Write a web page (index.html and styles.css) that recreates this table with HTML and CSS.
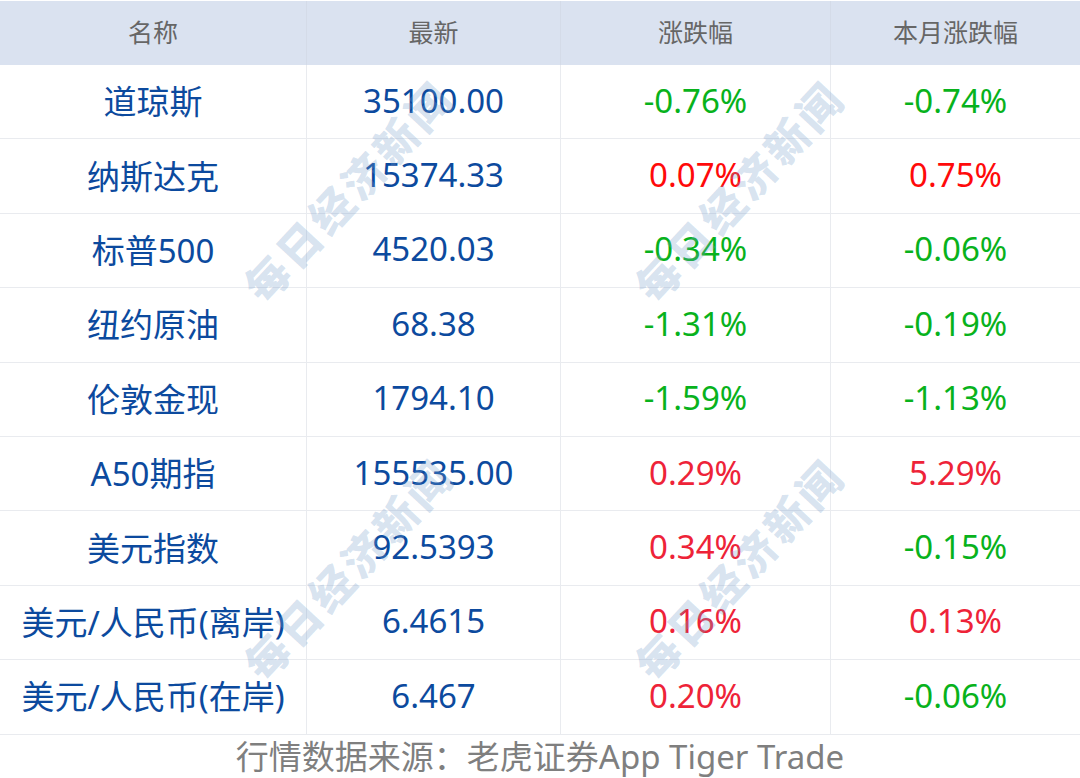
FILE: index.html
```html
<!doctype html>
<html lang="zh-CN">
<head>
    <meta charset="utf-8">
    <meta name="viewport" content="width=device-width, initial-scale=1">
    <title>行情数据</title>
    <link rel="stylesheet" href="styles.css">
</head>

<body>
    <div class="board">
        <div class="quotes">
            <div class="cell head">名称</div>
            <div class="cell head">最新</div>
            <div class="cell head">涨跌幅</div>
            <div class="cell head">本月涨跌幅</div>

            <div class="cell name">道琼斯</div>
            <div class="cell num">35100.00</div>
            <div class="cell down">-0.76%</div>
            <div class="cell down">-0.74%</div>

            <div class="cell name">纳斯达克</div>
            <div class="cell num">15374.33</div>
            <div class="cell up bright">0.07%</div>
            <div class="cell up bright">0.75%</div>

            <div class="cell name">标普500</div>
            <div class="cell num">4520.03</div>
            <div class="cell down">-0.34%</div>
            <div class="cell down">-0.06%</div>

            <div class="cell name">纽约原油</div>
            <div class="cell num">68.38</div>
            <div class="cell down">-1.31%</div>
            <div class="cell down">-0.19%</div>

            <div class="cell name">伦敦金现</div>
            <div class="cell num">1794.10</div>
            <div class="cell down">-1.59%</div>
            <div class="cell down">-1.13%</div>

            <div class="cell name">A50期指</div>
            <div class="cell num">155535.00</div>
            <div class="cell up">0.29%</div>
            <div class="cell up">5.29%</div>

            <div class="cell name">美元指数</div>
            <div class="cell num">92.5393</div>
            <div class="cell up">0.34%</div>
            <div class="cell down">-0.15%</div>

            <div class="cell name">美元/人民币(离岸)</div>
            <div class="cell num">6.4615</div>
            <div class="cell up">0.16%</div>
            <div class="cell up">0.13%</div>

            <div class="cell name">美元/人民币(在岸)</div>
            <div class="cell num">6.467</div>
            <div class="cell up">0.20%</div>
            <div class="cell down">-0.06%</div>
        </div>

        <div class="mark mark-a">每日经济新闻</div>
        <div class="mark mark-b">每日经济新闻</div>
        <div class="mark mark-c">每日经济新闻</div>
        <div class="mark mark-d">每日经济新闻</div>
    </div>

    <div class="source">行情数据来源：老虎证券App Tiger Trade</div>
</body>
</html>
```

FILE: styles.css
```css
* {
  box-sizing: border-box;
}

body {
  margin: 0;
  width: 1080px;
  height: 778px;
  overflow: hidden;
  background: #fff;
  font-family: 'Noto Sans', 'Noto Sans CJK SC', sans-serif;
}

.board {
  position: relative;
  overflow: hidden;
}

.quotes {
  display: grid;
  grid-template-columns: 307px 254px 270px 249px;
  grid-template-rows: 64px repeat(9, 74.4px);
  border-top: 1px solid #fff;
}

.cell {
  display: flex;
  align-items: center;
  justify-content: center;
  border-right: 1px solid #e9ebef;
  border-bottom: 1px solid #e9ebef;
  font-size: 33px;
  white-space: nowrap;
  padding-bottom: 3px;
}

.cell:nth-child(4n) {
  border-right: none;
}

.head {
  background: #dae2f0;
  color: #666;
  font-size: 25px;
  border-bottom: none;
  border-right-color: #d4dbe8;
  padding-bottom: 4px;
}

.name,
.num {
  color: #0c4a9e;
}

.down {
  color: #08b21c;
}

.up {
  color: #ee2338;
}

.up.bright {
  color: #ff0a0a;
}

.mark {
  position: absolute;
  width: 360px;
  margin-left: -180px;
  margin-top: -30px;
  text-align: center;
  font-family: 'Noto Sans CJK SC', sans-serif;
  font-weight: 900;
  font-size: 43px;
  letter-spacing: 4px;
  line-height: 60px;
  color: rgba(120, 160, 205, 0.3);
  transform: rotate(-47deg);
  pointer-events: none;
}

.mark-a { left: 347px; top: 190px; }
.mark-b { left: 738px; top: 190px; }
.mark-c { left: 347px; top: 568px; }
.mark-d { left: 738px; top: 568px; }

.source {
  text-align: center;
  color: #7f7f7f;
  font-size: 33px;
  line-height: 40px;
  margin-top: 2px;
}
```
